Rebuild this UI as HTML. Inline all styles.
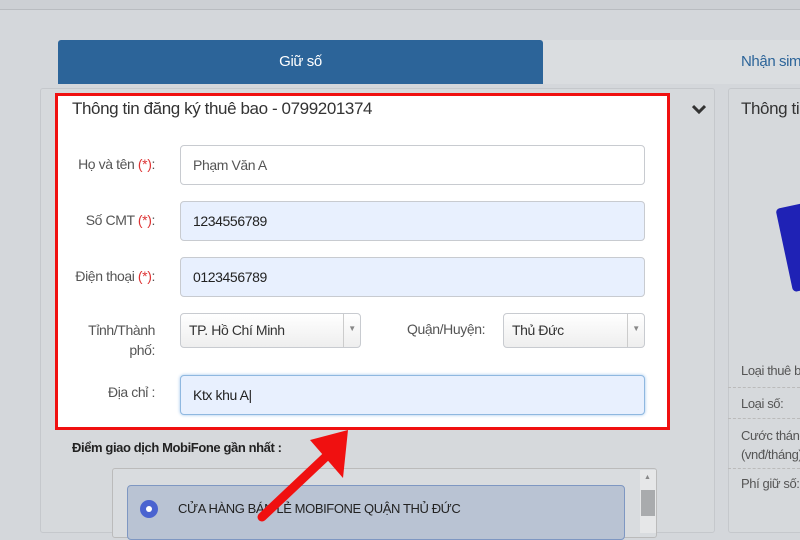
<!DOCTYPE html>
<html><head><meta charset="utf-8"><style>
*{box-sizing:border-box;margin:0;padding:0}
body{width:800px;height:533px;overflow:hidden;background:#d4d7db;font-family:"Liberation Sans Narrow","Liberation Sans",sans-serif;color:#333;position:relative}
.a{position:absolute}
.t{font-size:14px;letter-spacing:-0.4px}
.inp{position:absolute;left:180px;width:465px;height:40px;border:1px solid #c8cbd0;border-radius:4px;background:#e8f0fe;padding:11px 12px;font-size:14px;letter-spacing:-0.4px;color:#222}
.lbl{position:absolute;right:calc(800px - 155px);font-size:14px;letter-spacing:-0.4px;color:#555;text-align:right}
.r{color:#d33}
.sel{position:absolute;height:35px;border:1px solid #c8cbd0;border-radius:4px;background:linear-gradient(#fff,#eee);font-size:14px;letter-spacing:-0.4px;padding:8px 8px;color:#333}
.sel i{position:absolute;right:0;top:0;bottom:0;width:17px;border-left:1px solid #ccc;font-style:normal;font-size:8px;color:#888;text-align:center;line-height:30px}
</style></head><body>
<div class="a" style="left:0;top:0;width:800px;height:10px;background:#cdd0d4;border-bottom:1px solid #b9bcc0"></div>
<div class="a" style="left:58px;top:40px;width:485px;height:44px;background:#2c6499;border-radius:3px 3px 0 0;color:#fff;font-size:15px;text-align:center;line-height:44px;letter-spacing:-0.4px">Giữ số</div>
<div class="a" style="left:543px;top:40px;width:257px;height:44px;background:#dadde0;color:#2c6499;font-size:15px;line-height:44px;padding-left:198px;letter-spacing:-0.4px;white-space:nowrap">Nhận sim</div>
<div class="a" style="left:40px;top:88px;width:675px;height:445px;background:#d6d9dc;border:1px solid #c5c8cc;border-radius:3px"></div>
<div class="a" style="left:728px;top:88px;width:80px;height:445px;background:#d6d9dc;border:1px solid #c5c8cc;border-radius:3px"></div>
<div class="a t" style="left:741px;top:99px;font-size:17px;color:#333;white-space:nowrap">Thông tin</div>
<div class="a" style="left:784px;top:205px;width:30px;height:85px;background:#1f22b5;border-radius:4px;transform:rotate(-12deg)"></div>
<div class="a t" style="left:741px;top:363px;font-size:13px;color:#555;white-space:nowrap">Loại thuê bao</div>
<div class="a" style="left:728px;top:387px;width:72px;border-top:1px dashed #bbb"></div>
<div class="a t" style="left:741px;top:396px;font-size:13px;color:#555">Loại số:</div>
<div class="a" style="left:728px;top:418px;width:72px;border-top:1px dashed #bbb"></div>
<div class="a t" style="left:741px;top:426px;font-size:13px;color:#555;line-height:19px;white-space:nowrap">Cước tháng<br>(vnđ/tháng)</div>
<div class="a" style="left:728px;top:468px;width:72px;border-top:1px dashed #bbb"></div>
<div class="a t" style="left:741px;top:476px;font-size:13px;color:#555">Phí giữ số:</div>
<svg class="a" style="left:692px;top:104px" width="14" height="10"><path d="M1 2 L7 8 L13 2" stroke="#333" stroke-width="3" fill="none"/></svg>
<div class="a" style="left:55px;top:93px;width:615px;height:337px;background:#fff;border:3px solid #f01010"></div>
<div class="a t" style="left:72px;top:99px;font-size:17px;color:#333">Thông tin đăng ký thuê bao - 0799201374</div>
<div class="lbl" style="top:156px">Họ và tên <span class="r">(*)</span>:</div>
<div class="inp" style="top:145px;background:#fff;color:#555">Phạm Văn A</div>
<div class="lbl" style="top:212px">Số CMT <span class="r">(*)</span>:</div>
<div class="inp" style="top:201px">1234556789</div>
<div class="lbl" style="top:268px">Điện thoại <span class="r">(*)</span>:</div>
<div class="inp" style="top:257px">0123456789</div>
<div class="lbl" style="top:320px;line-height:20px">Tỉnh/Thành<br>phố:</div>
<div class="sel" style="left:180px;top:313px;width:181px">TP. Hồ Chí Minh<i>▼</i></div>
<div class="a t" style="left:407px;top:321px;color:#555">Quận/Huyện:</div>
<div class="sel" style="left:503px;top:313px;width:142px">Thủ Đức<i>▼</i></div>
<div class="lbl" style="top:384px">Địa chỉ :</div>
<div class="inp" style="top:375px;height:40px;border-color:#8fb8e0;box-shadow:0 0 3px #9cc3ea">Ktx khu A|</div>
<div class="a t" style="left:72px;top:440px;font-weight:bold;font-size:13px;color:#222">Điểm giao dịch MobiFone gần nhất :</div>
<div class="a" style="left:112px;top:468px;width:545px;height:70px;background:#d9dcdf;border:1px solid #bbb;border-radius:3px"></div>
<div class="a" style="left:640px;top:470px;width:16px;height:63px;background:#e6e7e8"></div>
<div class="a" style="left:641px;top:490px;width:14px;height:26px;background:#a9abad"></div>
<div class="a" style="left:644px;top:474px;font-size:7px;color:#888">▲</div>
<div class="a" style="left:127px;top:485px;width:498px;height:55px;background:#b9c3d3;border:1px solid #7e97c2;border-radius:4px"></div>
<div class="a" style="left:140px;top:500px;width:18px;height:18px;border-radius:50%;background:#4a63d0"></div>
<div class="a" style="left:146px;top:506px;width:6px;height:6px;border-radius:50%;background:#fff"></div>
<div class="a t" style="left:178px;top:501px;font-size:13px;color:#222">CỬA HÀNG BÁN LẺ MOBIFONE QUẬN THỦ ĐỨC</div>
<svg class="a" style="left:0;top:0" width="800" height="533"><path d="M262 517 L333 450" stroke="#f01010" stroke-width="9" stroke-linecap="round"/><path d="M310 440 L348 430 L343 478 Z" fill="#f01010"/></svg>
</body></html>
